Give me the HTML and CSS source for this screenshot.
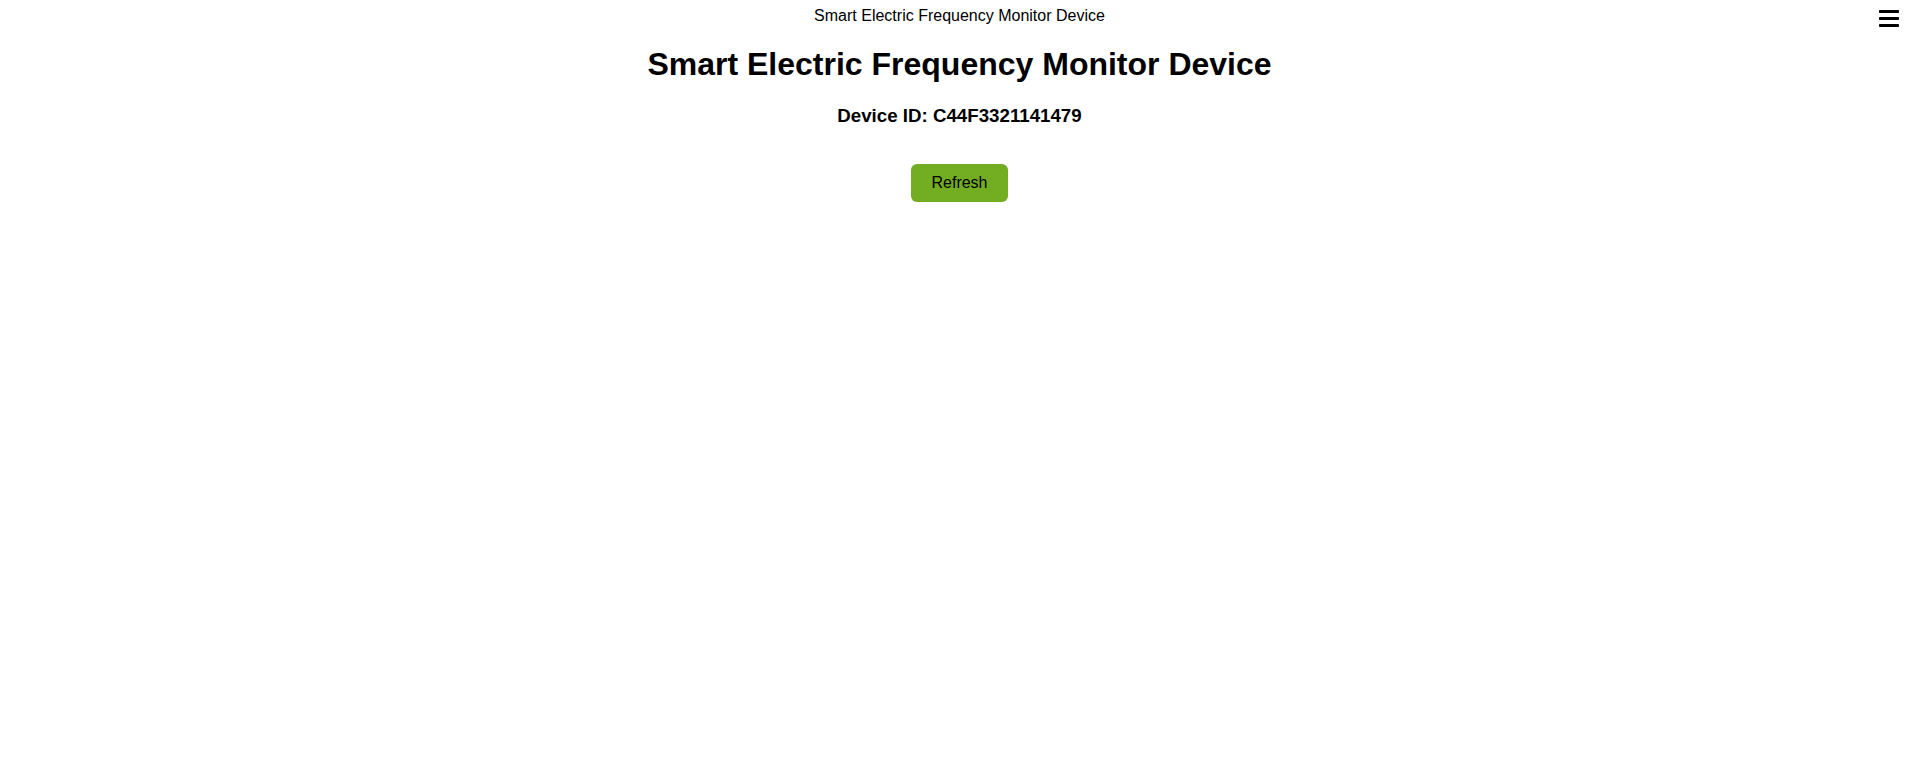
FILE: index.html
```html
<!DOCTYPE html>
<html lang="en">
<head>
<meta charset="utf-8">
<title>Smart Electric Frequency Monitor Device</title>
<link rel="stylesheet" href="styles.css">
</head>
<body>
  <header class="topbar">
    <span class="spacer"></span>
    <span class="topbar-title">Smart Electric Frequency Monitor Device</span>
    <button class="menu-btn" aria-label="Menu">
      <svg width="20" height="17" viewBox="0 0 20 17" aria-hidden="true">
        <rect x="0" y="0" width="20" height="3" rx="0.8" fill="#000"/>
        <rect x="0" y="7" width="20" height="3" rx="0.8" fill="#000"/>
        <rect x="0" y="14" width="20" height="3" rx="0.8" fill="#000"/>
      </svg>
    </button>
  </header>
  <main class="content">
    <h1 class="title">Smart Electric Frequency Monitor Device</h1>
    <h3 class="device-id">Device ID: C44F3321141479</h3>
    <div class="actions">
      <button class="refresh-btn">Refresh</button>
    </div>
  </main>
</body>
</html>
```

FILE: styles.css
```css
html, body {
  background: #ffffff;
}

body {
  margin: 8px;
  font-family: "Liberation Sans", Arial, sans-serif;
  color: #000;
}

.topbar {
  display: grid;
  grid-template-columns: 1fr auto 1fr;
  align-items: start;
  font-size: 16px;
  line-height: 18px;
  margin-top: -1px;
}

.topbar-title {
  text-align: center;
}

.menu-btn {
  justify-self: end;
  margin: 3px 12px 0 0;
  padding: 0;
  border: none;
  background: none;
  line-height: 0;
  cursor: pointer;
}

.content {
  text-align: center;
}

.title {
  font-size: 32px;
  font-weight: bold;
  margin: 19px 0 22px;
}

.device-id {
  font-size: 18.72px;
  font-weight: bold;
  margin: 0;
}

.actions {
  margin-top: 37px;
}

.refresh-btn {
  background: #73ad21;
  color: #000;
  border: none;
  border-radius: 6px;
  padding: 10px 20px;
  font-family: "Liberation Sans", Arial, sans-serif;
  font-size: 16px;
  line-height: 18px;
  cursor: pointer;
}
```
